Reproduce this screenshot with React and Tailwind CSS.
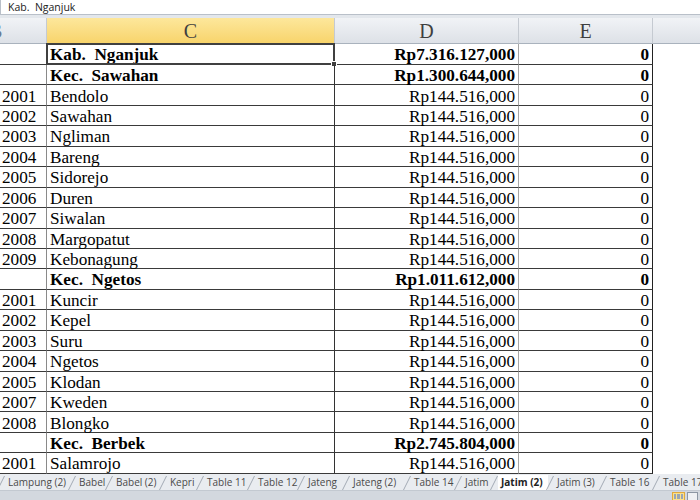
const rows = [
  { b: '', c: 'Kab.  Nganjuk', d: 'Rp7.316.127,000', bold: true },
  { b: '', c: 'Kec.  Sawahan', d: 'Rp1.300.644,000', bold: true },
  { b: '2001', c: 'Bendolo' },
  { b: '2002', c: 'Sawahan' },
  { b: '2003', c: 'Ngliman' },
  { b: '2004', c: 'Bareng' },
  { b: '2005', c: 'Sidorejo' },
  { b: '2006', c: 'Duren' },
  { b: '2007', c: 'Siwalan' },
  { b: '2008', c: 'Margopatut' },
  { b: '2009', c: 'Kebonagung' },
  { b: '', c: 'Kec.  Ngetos', d: 'Rp1.011.612,000', bold: true },
  { b: '2001', c: 'Kuncir' },
  { b: '2002', c: 'Kepel' },
  { b: '2003', c: 'Suru' },
  { b: '2004', c: 'Ngetos' },
  { b: '2005', c: 'Klodan' },
  { b: '2007', c: 'Kweden' },
  { b: '2008', c: 'Blongko' },
  { b: '', c: 'Kec.  Berbek', d: 'Rp2.745.804,000', bold: true },
  { b: '2001', c: 'Salamrojo' },
];

const tabs = [
  { name: 'Lampung (2)', w: 'w-[71px]' },
  { name: 'Babel', w: 'w-[37px]' },
  { name: 'Babel (2)', w: 'w-[54px]' },
  { name: 'Kepri', w: 'w-[37px]' },
  { name: 'Table 11', w: 'w-[51px]' },
  { name: 'Table 12', w: 'w-[50px]' },
  { name: 'Jateng', w: 'w-[45px]' },
  { name: 'Jateng (2)', w: 'w-[61px]' },
  { name: 'Table 14', w: 'w-[51px]' },
  { name: 'Jatim', w: 'w-[36px]' },
  { name: 'Jatim (2)', w: 'w-[56px]', active: true },
  { name: 'Jatim (3)', w: 'w-[53px]' },
  { name: 'Table 16', w: 'w-[53px]' },
  { name: 'Table 17', w: 'w-[60px]' },
];

const Slash = () => (
  <svg width="8" height="15" viewBox="0 0 8 15" className="shrink-0">
    <line x1="0.5" y1="15" x2="7.5" y2="1" stroke="#a3aab4" strokeWidth="1" />
  </svg>
);

export default function App() {
  return (
    <div className="w-[700px] h-[500px] overflow-hidden bg-white flex flex-col font-['Liberation_Serif',serif] text-black">
      {/* formula bar */}
      <div className="h-[15px] shrink-0 border-b border-l border-[#b9c0c9] flex items-center pl-[7px] pt-[1px] font-['Open_Sans',sans-serif] text-[10.5px] text-[#222] whitespace-pre">
        Kab.  Nganjuk
      </div>
      <div className="h-[3px] shrink-0 bg-[#e3e7ec]" />

      {/* column headers */}
      <div className="h-[26px] shrink-0 flex text-[20px] text-[#3f3f3f]">
        <div className="w-[47px] overflow-hidden flex items-center border-r border-b border-r-[#c5cad1] border-b-[#a9b2bd] bg-linear-to-b from-[#f1f3f6] to-[#dde1e7]">
          <span className="-ml-[11px] text-[#6a7b93]">B</span>
        </div>
        <div className="w-[288px] flex items-center justify-center border-r border-b border-r-[#c5cad1] border-b-[#e9b14a] bg-linear-to-b from-[#fde79b] to-[#f8d46b]">
          C
        </div>
        <div className="w-[184px] flex items-center justify-center border-r border-b border-r-[#c5cad1] border-b-[#a9b2bd] bg-linear-to-b from-[#f1f3f6] to-[#dde1e7]">
          D
        </div>
        <div className="w-[134px] flex items-center justify-center border-r border-b border-r-[#c5cad1] border-b-[#a9b2bd] bg-linear-to-b from-[#f1f3f6] to-[#dde1e7]">
          E
        </div>
        <div className="flex-1 border-b border-b-[#a9b2bd] bg-linear-to-b from-[#f1f3f6] to-[#dde1e7]" />
      </div>

      {/* data rows */}
      <div className="flex flex-col text-[17.2px] leading-none">
        {rows.map((r, i) => (
          <div key={i} className={`flex ${i === 0 ? 'h-[21px]' : 'h-[20.45px]'} ${r.bold ? 'font-bold' : ''}`}>
            <div className="w-[47px] flex items-center pl-[2px] pt-[2px] border-r border-b border-r-[#8a8a8a] border-b-[#3a3a3a] font-normal">
              {r.b}
            </div>
            <div className="relative w-[288px] flex items-center pl-[3px] pt-[2px] border-r border-b border-r-[#333] border-b-[#3a3a3a] whitespace-pre">
              {r.c}
              {i === 0 && (
                <div className="absolute -left-[1px] -top-[1px] -right-[1px] -bottom-[1px] border-2 border-[#404040]">
                  <div className="absolute -right-[4px] -bottom-[4px] w-[6px] h-[6px] bg-[#404040] border border-white" />
                </div>
              )}
            </div>
            <div className="w-[184px] flex items-center justify-end pr-[3px] pt-[2px] border-r border-b border-r-[#a6a6a6] border-b-[#3a3a3a]">
              {r.d || 'Rp144.516,000'}
            </div>
            <div className="w-[134px] flex items-center justify-end pr-[3px] pt-[2px] border-r border-b border-r-[#222] border-b-[#3a3a3a]">
              0
            </div>
            <div className="flex-1" />
          </div>
        ))}
      </div>

      {/* sheet tabs */}
      <div className="h-[16px] shrink-0 mt-auto flex items-end bg-[#e9ecf0] font-['Open_Sans',sans-serif] text-[10px] text-[#4a4a4a] overflow-hidden">
        <div className="flex -ml-[3px] h-[15px]">
          {tabs.map((t) => (
            <div key={t.name} className={`${t.w} shrink-0 flex items-center h-full`}>
              <Slash />
              <span
                className={`h-full flex items-center pl-[3px] whitespace-pre ${
                  t.active ? 'bg-white font-bold text-[#222] pr-[5px]' : ''
                }`}
              >
                {t.name}
              </span>
            </div>
          ))}
        </div>
      </div>

      {/* status bar */}
      <div className="h-[10px] shrink-0 flex justify-end items-start gap-[2px] pr-[2px] border-t border-[#c3c9d1] bg-[#d3d8df]">
        <div className="w-[13px] h-[9px] mt-[1px] bg-[#fbe08a] border border-[#e2a93a] grid grid-cols-3 gap-[1px] p-[1px]">
          <div className="bg-[#9aa5b3]" />
          <div className="bg-[#9aa5b3]" />
          <div className="bg-[#9aa5b3]" />
        </div>
        <div className="w-[11px] h-[9px] mt-[1px] bg-[#eef0f3] border border-[#8c96a3]" />
      </div>
    </div>
  );
}
